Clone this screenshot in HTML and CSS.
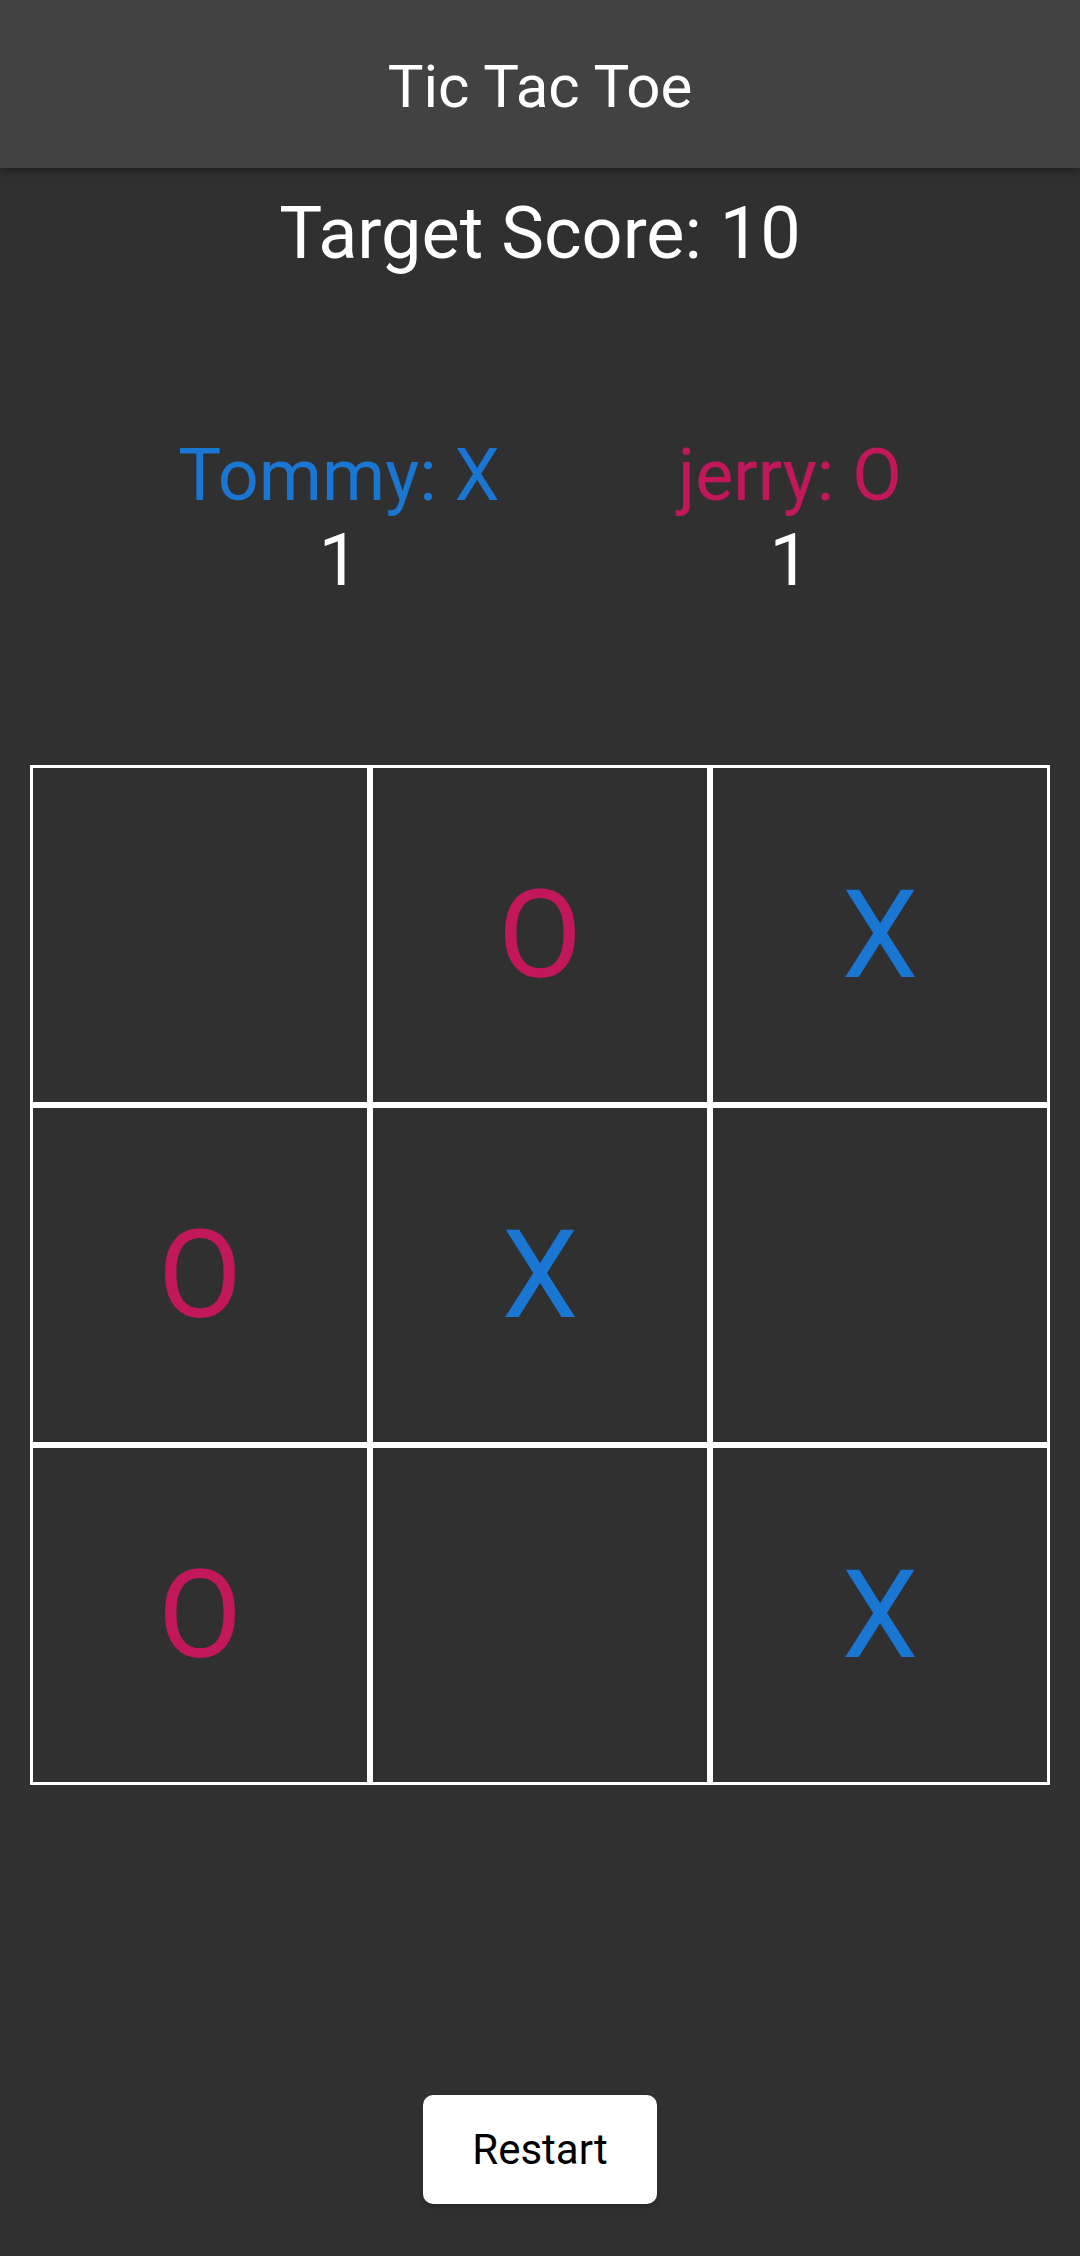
FILE: index.html
```html
<!DOCTYPE html>
<html lang="en">
<head>
    <meta charset="UTF-8">
    <meta name="viewport" content="width=device-width, initial-scale=1.0">
    <title>Tic Tac Toe</title>
    <link rel="stylesheet" href="styles.css">
</head>
<body>
    <header class="app-bar">
        <h1>Tic Tac Toe</h1>
    </header>

    <main class="game">
        <div class="target">Target Score: 10</div>

        <!-- Players and scores -->
        <div class="players">
            <div class="player">
                <div class="name x">Tommy: X</div>
                <div class="score" id="score-x">1</div>
            </div>
            <div class="player">
                <div class="name o">jerry: O</div>
                <div class="score" id="score-o">1</div>
            </div>
        </div>

        <!-- Board -->
        <div class="board" id="board">
            <div class="cell"></div>
            <div class="cell o">O</div>
            <div class="cell x">X</div>
            <div class="cell o">O</div>
            <div class="cell x">X</div>
            <div class="cell"></div>
            <div class="cell o">O</div>
            <div class="cell"></div>
            <div class="cell x">X</div>
        </div>

        <div class="actions">
            <button class="restart" id="restart">Restart</button>
        </div>
    </main>
</body>
</html>
```

FILE: styles.css
```css
* {
    box-sizing: border-box;
}

body {
    margin: 0;
    font-family: Roboto, "Noto Sans", Arial, sans-serif;
    background-color: #303030;
    color: #fff;
    min-height: 2256px;
}

.app-bar {
    height: 168px;
    background-color: #424242;
    display: flex;
    align-items: center;
    justify-content: center;
    box-shadow: 0 3px 8px rgba(0, 0, 0, 0.35);
    position: relative;
}

.app-bar h1 {
    margin: 0;
    font-size: 60px;
    font-weight: 400;
    padding-top: 4px;
}

.game {
    display: flex;
    flex-direction: column;
}

.target {
    margin-top: 23px;
    text-align: center;
    font-size: 72px;
}

.players {
    display: flex;
    justify-content: space-evenly;
    margin-top: 157px;
}

.player {
    display: flex;
    flex-direction: column;
    align-items: center;
    font-size: 72px;
}

.name.x { color: #1976d2; }
.name.o { color: #c2185b; }

.board {
    display: grid;
    grid-template-columns: repeat(3, 340px);
    grid-template-rows: repeat(3, 340px);
    margin: 162px 30px 0;
}

.cell {
    border: 3px solid #fff;
    display: flex;
    align-items: center;
    justify-content: center;
    font-size: 122px;
}

.cell.x { color: #1976d2; }
.cell.o { color: #c2185b; }

.actions {
    display: flex;
    justify-content: center;
    margin-top: 310px;
}

.restart {
    width: 234px;
    height: 109px;
    border: none;
    border-radius: 10px;
    background-color: #fff;
    color: #000;
    font-family: Roboto, Arial, sans-serif;
    font-size: 42px;
    box-shadow: 0 2px 4px rgba(0, 0, 0, 0.25);
}
```
